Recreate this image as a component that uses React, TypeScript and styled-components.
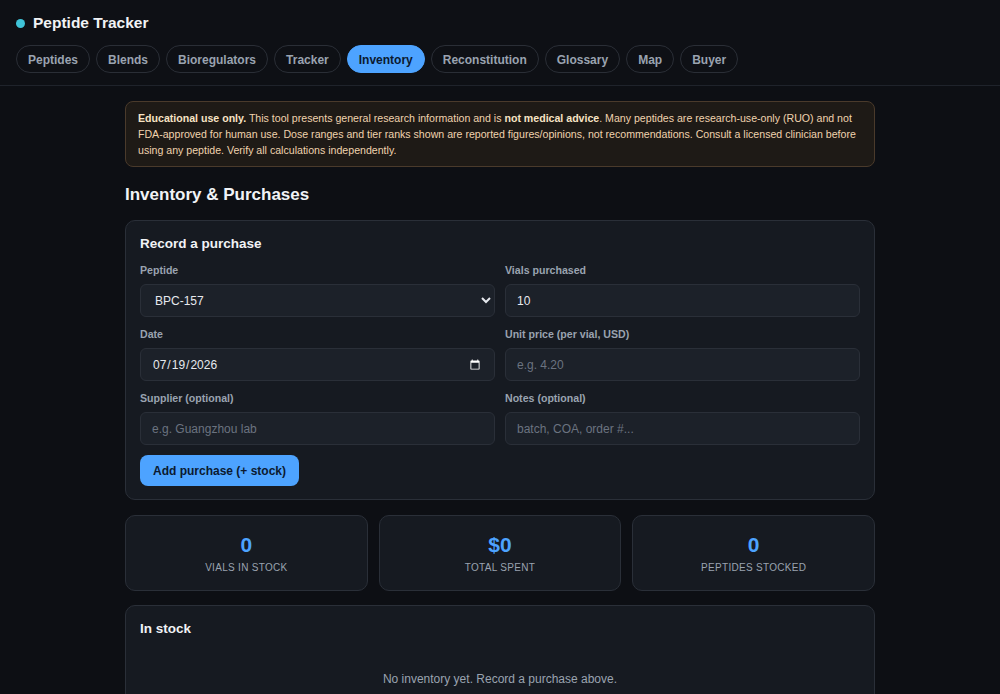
import React from 'react'
import styled, { createGlobalStyle } from 'styled-components'

const TABS = ['Peptides', 'Blends', 'Bioregulators', 'Tracker', 'Inventory', 'Reconstitution', 'Glossary', 'Map', 'Buyer']

const STATS = [
  { value: '0', label: 'Vials in stock' },
  { value: '$0', label: 'Total spent' },
  { value: '0', label: 'Peptides stocked' },
]

export default function App() {
  return (
    <>
      <GlobalStyle />
      <Header>
        <Brand>
          <Dot />
          <BrandName>Peptide Tracker</BrandName>
        </Brand>
        <Tabs>
          {TABS.map((t) => (
            <Tab key={t} $active={t === 'Inventory'}>{t}</Tab>
          ))}
        </Tabs>
      </Header>

      <Main>
        <Disclaimer>
          <b>Educational use only.</b> This tool presents general research information and is <b>not medical advice</b>.
          Many peptides are research-use-only (RUO) and not FDA-approved for human use. Dose ranges and tier ranks shown
          are reported figures/opinions, not recommendations. Consult a licensed clinician before using any peptide.
          Verify all calculations independently.
        </Disclaimer>

        <PageTitle>Inventory &amp; Purchases</PageTitle>

        <Card>
          <CardTitle>Record a purchase</CardTitle>
          <FormGrid>
            <Field>
              <Label>Peptide</Label>
              <Select defaultValue="BPC-157">
                <option>BPC-157</option>
                <option>TB-500</option>
                <option>GHK-Cu</option>
              </Select>
            </Field>
            <Field>
              <Label>Vials purchased</Label>
              <Input type="number" defaultValue="10" />
            </Field>
            <Field>
              <Label>Date</Label>
              <Input type="date" defaultValue="2026-07-19" />
            </Field>
            <Field>
              <Label>Unit price (per vial, USD)</Label>
              <Input placeholder="e.g. 4.20" />
            </Field>
            <Field>
              <Label>Supplier (optional)</Label>
              <Input placeholder="e.g. Guangzhou lab" />
            </Field>
            <Field>
              <Label>Notes (optional)</Label>
              <Input placeholder="batch, COA, order #..." />
            </Field>
          </FormGrid>
          <PrimaryButton>Add purchase (+ stock)</PrimaryButton>
        </Card>

        <Stats>
          {STATS.map((s) => (
            <StatCard key={s.label}>
              <StatValue>{s.value}</StatValue>
              <StatLabel>{s.label}</StatLabel>
            </StatCard>
          ))}
        </Stats>

        <Card>
          <CardTitle>In stock</CardTitle>
          <Empty>No inventory yet. Record a purchase above.</Empty>
        </Card>
      </Main>
    </>
  )
}

const GlobalStyle = createGlobalStyle`
  html, body {
    margin: 0;
    background: #0d0f14;
    color: #e6e9ee;
    font-family: "Liberation Sans", Arial, sans-serif;
    color-scheme: dark;
  }
  * { box-sizing: border-box; }
`

const Header = styled.header`
  padding: 13px 16px 12px;
  border-bottom: 1px solid #1f232b;
  background: #0e1015;
`
const Brand = styled.div`
  display: flex;
  align-items: center;
  gap: 8px;
`
const Dot = styled.span`
  width: 9px;
  height: 9px;
  border-radius: 50%;
  background: #3fc4d8;
`
const BrandName = styled.h1`
  margin: 0;
  font-size: 15.5px;
  font-weight: 700;
  color: #f1f3f6;
  line-height: 20px;
`
const Tabs = styled.nav`
  display: flex;
  gap: 6px;
  margin-top: 12px;
`
const Tab = styled.button<{ $active?: boolean }>`
  font-family: inherit;
  font-size: 12px;
  font-weight: 700;
  height: 28px;
  padding: 1px 11px 0;
  border-radius: 999px;
  border: 1px solid ${(p) => (p.$active ? '#4da3ff' : '#2a2e36')};
  background: ${(p) => (p.$active ? '#4da3ff' : 'transparent')};
  color: ${(p) => (p.$active ? '#0b1a30' : '#9aa3b0')};
`

const Main = styled.main`
  max-width: 750px;
  margin: 0 auto;
  padding: 15px 0 40px;
  display: flex;
  flex-direction: column;
`
const Disclaimer = styled.div`
  background: #1e1a16;
  border: 1px solid #4a3a2b;
  border-radius: 8px;
  padding: 8px 12px;
  font-size: 10.6px;
  line-height: 16px;
  color: #f0d3ae;

  b { color: #f7e3c4; }
`
const PageTitle = styled.h2`
  margin: 18px 0 15px;
  font-size: 17px;
  line-height: 20px;
  font-weight: 700;
  color: #f1f3f6;
`
const Card = styled.section`
  background: #161a21;
  border: 1px solid #2a2f38;
  border-radius: 10px;
  padding: 14px 14px 13px;
`
const CardTitle = styled.h3`
  margin: 0 0 11px;
  font-size: 13.5px;
  font-weight: 700;
  color: #f1f3f6;
  line-height: 18px;
`
const FormGrid = styled.div`
  display: grid;
  grid-template-columns: 1fr 1fr;
  column-gap: 10px;
  row-gap: 11px;
`
const Field = styled.label`
  display: flex;
  flex-direction: column;
  gap: 7px;
`
const Label = styled.span`
  font-size: 10.6px;
  line-height: 13px;
  font-weight: 700;
  color: #9aa3b0;
`
const Input = styled.input`
  height: 33px;
  background: #1c2129;
  border: 1px solid #2a2f38;
  border-radius: 6px;
  padding: 0 11px;
  font-family: inherit;
  font-size: 12px;
  color: #e6e9ee;
  outline: none;

  &::placeholder { color: #6b7380; }
`
const Select = styled.select`
  height: 33px;
  background: #1c2129;
  border: 1px solid #2a2f38;
  border-radius: 6px;
  padding: 0 10px;
  font-family: inherit;
  font-size: 12px;
  color: #e6e9ee;
  outline: none;
`
const PrimaryButton = styled.button`
  align-self: flex-start;
  margin-top: 10px;
  height: 31px;
  padding: 0 13px;
  background: #4da3ff;
  border: none;
  border-radius: 8px;
  font-family: inherit;
  font-size: 12px;
  font-weight: 700;
  color: #0b1a30;
`
const Stats = styled.div`
  display: grid;
  grid-template-columns: repeat(3, 1fr);
  gap: 11px;
  margin: 15px 0 14px;
`
const StatCard = styled.div`
  background: #161a21;
  border: 1px solid #2a2f38;
  border-radius: 10px;
  height: 76px;
  display: flex;
  flex-direction: column;
  align-items: center;
  justify-content: center;
  gap: 5px;
`
const StatValue = styled.div`
  font-size: 21px;
  font-weight: 700;
  color: #4da3ff;
  line-height: 24px;
`
const StatLabel = styled.div`
  font-size: 10px;
  text-transform: uppercase;
  letter-spacing: 0.3px;
  color: #9aa3b0;
`
const Empty = styled.p`
  margin: 34px 0 20px;
  text-align: center;
  font-size: 12px;
  color: #9aa3b0;
`
